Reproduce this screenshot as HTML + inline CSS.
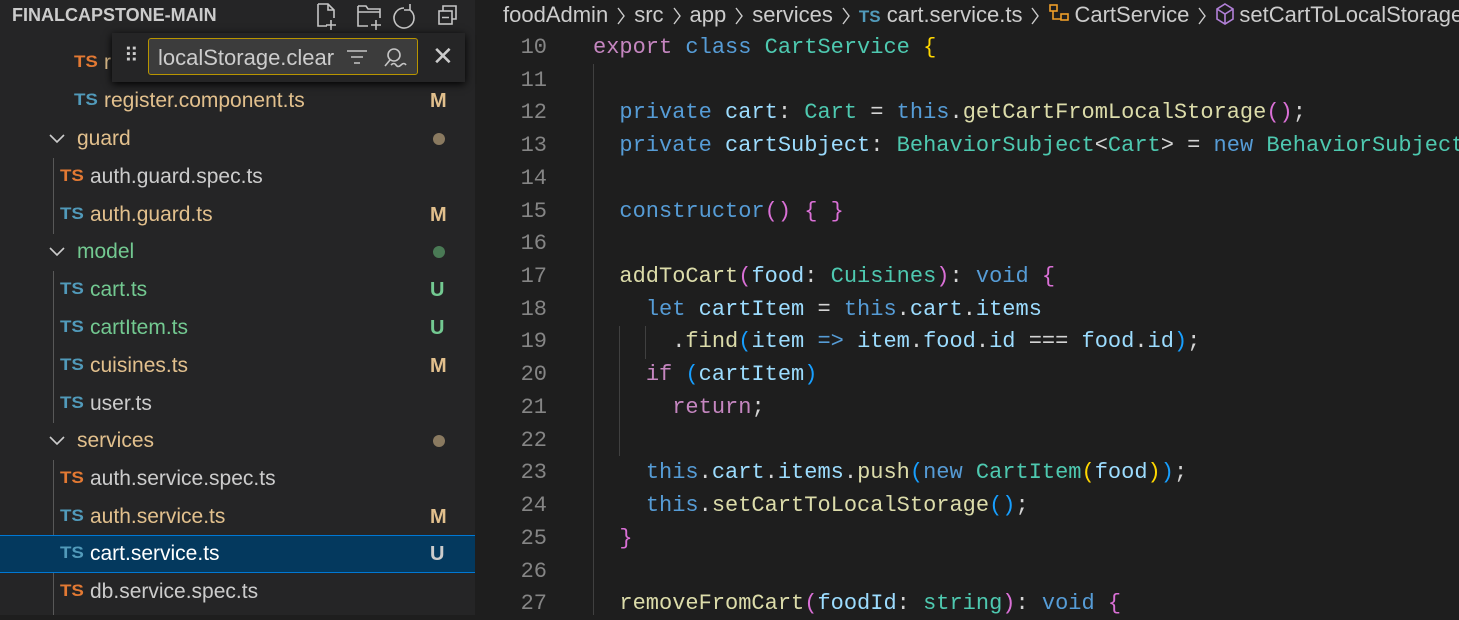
<!DOCTYPE html>
<html><head><meta charset="utf-8"><style>
body{margin:0;width:1459px;height:615px;overflow:hidden;background:#1e1e1e;font-family:"Liberation Sans",sans-serif;position:relative}
#side{position:absolute;left:0;top:0;width:475px;height:615px;background:#252526}
#shead{position:absolute;left:0;top:0;width:475px;height:32px;color:#ccc;font-weight:bold;font-size:18px}
.row{position:absolute;left:0;width:475px;height:38px;line-height:38px;font-size:21px;color:#ccc}
.row .ic{position:absolute;font-weight:bold;font-size:17px;top:-1px;transform:scaleX(1.1);transform-origin:left}
.o{color:#e37933}.b{color:#519aba}
.row .t{position:absolute}
.row .s{position:absolute;left:430px;font-weight:bold;font-size:20px}
.mod{color:#e2c08d}.unt{color:#73c991}
.dot{position:absolute;left:433px;top:13px;width:12px;height:12px;border-radius:6px}
.chev{position:absolute;left:48px;top:12px}
.guide{position:absolute;left:53px;width:1px;background:#585858}
#crumb{position:absolute;left:475px;top:0;width:984px;height:32px;background:#1e1e1e;color:#ccc;font-size:22px;line-height:30px;white-space:nowrap;overflow:hidden}
#crumb svg{margin:0 9px;vertical-align:-3px}
.code{position:absolute;left:475px;width:984px;height:33px;line-height:33px;font-family:"Liberation Mono",monospace;font-size:22px;color:#d4d4d4;white-space:pre}
.ln{position:absolute;left:0;width:72px;text-align:right;color:#858585}
.tx{position:absolute;left:118px}
.k{color:#569cd6}.c{color:#c586c0}.cl{color:#4ec9b0}.v{color:#9cdcfe}.f{color:#dcdcaa}.y{color:#ffd700}.p{color:#da70d6}.bl{color:#179fff}
.ig{position:absolute;width:1px;background:#404040}
</style></head><body>
<div id="side">
<div id="shead"><span style="position:absolute;left:12px;top:5px">FINALCAPSTONE-MAIN</span>
<svg style="position:absolute;left:314px;top:2px" width="160" height="28" fill="none" stroke="#c5c5c5" stroke-width="1.6">
<path d="M4 2h10l6 6v8M4 2v22h9M20 8h-6V2M17 18v10M12 23h10"/>
<path d="M44 4h8l2 3h12v9M44 4v20h10M44 10h22M62 18v10M57 23h10"/>
<path d="M90 6a10 10 0 1 0 6 2M96 2v6h-6"/>
<rect x="125" y="9" width="13" height="13"/><path d="M129 9V4h13v13h-4M128 15.5h7"/>
</svg></div>
<div class="guide" style="top:158px;height:76px"></div>
<div class="guide" style="top:271px;height:152px"></div>
<div class="guide" style="top:460px;height:155px"></div>
<div class="row" style="top:44px"><span class="ic o" style="left:74px">TS</span><span class="t mod" style="left:104px">r</span></div>
<div class="row" style="top:82px"><span class="ic b" style="left:74px">TS</span><span class="t mod" style="left:104px">register.component.ts</span><span class="s mod">M</span></div>
<div class="row" style="top:120px"><svg class="chev" width="18" height="12" fill="none" stroke="#ccc" stroke-width="1.6"><path d="M2 3l7 7 7-7"/></svg><span class="t mod" style="left:77px">guard</span><span class="dot" style="background:#8a7a60"></span></div>
<div class="row" style="top:158px"><span class="ic o" style="left:60px">TS</span><span class="t" style="left:90px">auth.guard.spec.ts</span></div>
<div class="row" style="top:196px"><span class="ic b" style="left:60px">TS</span><span class="t mod" style="left:90px">auth.guard.ts</span><span class="s mod">M</span></div>
<div class="row" style="top:233px"><svg class="chev" width="18" height="12" fill="none" stroke="#ccc" stroke-width="1.6"><path d="M2 3l7 7 7-7"/></svg><span class="t unt" style="left:77px">model</span><span class="dot" style="background:#4a7a55"></span></div>
<div class="row" style="top:271px"><span class="ic b" style="left:60px">TS</span><span class="t unt" style="left:90px">cart.ts</span><span class="s unt">U</span></div>
<div class="row" style="top:309px"><span class="ic b" style="left:60px">TS</span><span class="t unt" style="left:90px">cartItem.ts</span><span class="s unt">U</span></div>
<div class="row" style="top:347px"><span class="ic b" style="left:60px">TS</span><span class="t mod" style="left:90px">cuisines.ts</span><span class="s mod">M</span></div>
<div class="row" style="top:385px"><span class="ic b" style="left:60px">TS</span><span class="t" style="left:90px">user.ts</span></div>
<div class="row" style="top:422px"><svg class="chev" width="18" height="12" fill="none" stroke="#ccc" stroke-width="1.6"><path d="M2 3l7 7 7-7"/></svg><span class="t mod" style="left:77px">services</span><span class="dot" style="background:#8a7a60"></span></div>
<div class="row" style="top:460px"><span class="ic o" style="left:60px">TS</span><span class="t" style="left:90px">auth.service.spec.ts</span></div>
<div class="row" style="top:498px"><span class="ic b" style="left:60px">TS</span><span class="t mod" style="left:90px">auth.service.ts</span><span class="s mod">M</span></div>
<div class="row" style="top:535px;height:36px;background:#04395e;border-top:1px solid #0078d4;border-bottom:1px solid #0078d4;line-height:36px"><span class="ic b" style="left:60px">TS</span><span class="t" style="left:90px;color:#fff">cart.service.ts</span><span class="s" style="color:#ccc">U</span></div>
<div class="row" style="top:573px"><span class="ic o" style="left:60px">TS</span><span class="t" style="left:90px">db.service.spec.ts</span></div>
<div style="position:absolute;left:112px;top:33px;width:353px;height:49px;background:#252526;box-shadow:0 2px 8px #000">
<span style="position:absolute;left:12px;top:10px;color:#ccc;font-size:20px;letter-spacing:-2px">⠿</span>
<div style="position:absolute;left:36px;top:5px;width:270px;height:37px;border:1px solid #b89500;border-radius:3px;background:#3c3c3c;color:#ccc;font-size:22px;line-height:37px;box-sizing:border-box;padding-left:9px">localStorage.clear
<svg style="position:absolute;left:196px;top:7px" width="70" height="24" fill="none" stroke="#c5c5c5" stroke-width="1.6"><path d="M2 5h20M6 11h12M9 17h6"/><circle cx="49" cy="9" r="6"/><path d="M45 14l-5 6M46 19q3-3 5 0t5 0t5 0"/></svg></div>
<span style="position:absolute;left:320px;top:8px;color:#ccc;font-size:26px">✕</span>
</div>
</div>
<div id="crumb"><span style="position:absolute;left:28px">foodAdmin<svg width="8" height="18" fill="none" stroke="#ccc" stroke-width="1.4"><path d="M1 1l6 8-6 8"/></svg>src<svg width="8" height="18" fill="none" stroke="#ccc" stroke-width="1.4"><path d="M1 1l6 8-6 8"/></svg>app<svg width="8" height="18" fill="none" stroke="#ccc" stroke-width="1.4"><path d="M1 1l6 8-6 8"/></svg>services<svg width="8" height="18" fill="none" stroke="#ccc" stroke-width="1.4"><path d="M1 1l6 8-6 8"/></svg><b style="color:#519aba;font-size:17px">TS</b> cart.service.ts<svg width="8" height="18" fill="none" stroke="#ccc" stroke-width="1.4"><path d="M1 1l6 8-6 8"/></svg><svg style="margin:0 2px 0 0" width="24" height="22" fill="none" stroke="#ee9d28" stroke-width="1.6"><rect x="2" y="2" width="7" height="6"/><rect x="13" y="11" width="7" height="6"/><path d="M5 8v8h8"/></svg>CartService<svg width="8" height="18" fill="none" stroke="#ccc" stroke-width="1.4"><path d="M1 1l6 8-6 8"/></svg><svg style="margin:0 4px 0 0" width="20" height="22" fill="none" stroke="#b180d7" stroke-width="1.6"><path d="M10 1l8 5v10l-8 5-8-5V6zM2 6l8 5 8-5M10 11v10"/></svg>setCartToLocalStorage</span></div>
<div class="ig" style="left:593px;top:64px;height:551px"></div>
<div class="ig" style="left:619px;top:326px;height:130px"></div>
<div class="ig" style="left:645px;top:326px;height:33px"></div>
<div class="code" style="top:31px"><span class="ln">10</span><span class="tx"><span class="c">export</span> <span class="k">class</span> <span class="cl">CartService</span> <span class="y">{</span></span></div>
<div class="code" style="top:64px"><span class="ln">11</span></div>
<div class="code" style="top:96px"><span class="ln">12</span><span class="tx">  <span class="k">private</span> <span class="v">cart</span>: <span class="cl">Cart</span> = <span class="k">this</span>.<span class="f">getCartFromLocalStorage</span><span class="p">()</span>;</span></div>
<div class="code" style="top:129px"><span class="ln">13</span><span class="tx">  <span class="k">private</span> <span class="v">cartSubject</span>: <span class="cl">BehaviorSubject</span>&lt;<span class="cl">Cart</span>&gt; = <span class="k">new</span> <span class="cl">BehaviorSubject</span></span></div>
<div class="code" style="top:162px"><span class="ln">14</span></div>
<div class="code" style="top:195px"><span class="ln">15</span><span class="tx">  <span class="k">constructor</span><span class="p">()</span> <span class="p">{ }</span></span></div>
<div class="code" style="top:227px"><span class="ln">16</span></div>
<div class="code" style="top:260px"><span class="ln">17</span><span class="tx">  <span class="f">addToCart</span><span class="p">(</span><span class="v">food</span>: <span class="cl">Cuisines</span><span class="p">)</span>: <span class="k">void</span> <span class="p">{</span></span></div>
<div class="code" style="top:293px"><span class="ln">18</span><span class="tx">    <span class="k">let</span> <span class="v">cartItem</span> = <span class="k">this</span>.<span class="v">cart</span>.<span class="v">items</span></span></div>
<div class="code" style="top:325px"><span class="ln">19</span><span class="tx">      .<span class="f">find</span><span class="bl">(</span><span class="v">item</span> <span class="k">=&gt;</span> <span class="v">item</span>.<span class="v">food</span>.<span class="v">id</span> === <span class="v">food</span>.<span class="v">id</span><span class="bl">)</span>;</span></div>
<div class="code" style="top:358px"><span class="ln">20</span><span class="tx">    <span class="c">if</span> <span class="bl">(</span><span class="v">cartItem</span><span class="bl">)</span></span></div>
<div class="code" style="top:391px"><span class="ln">21</span><span class="tx">      <span class="c">return</span>;</span></div>
<div class="code" style="top:424px"><span class="ln">22</span></div>
<div class="code" style="top:456px"><span class="ln">23</span><span class="tx">    <span class="k">this</span>.<span class="v">cart</span>.<span class="v">items</span>.<span class="f">push</span><span class="bl">(</span><span class="k">new</span> <span class="cl">CartItem</span><span class="y">(</span><span class="v">food</span><span class="y">)</span><span class="bl">)</span>;</span></div>
<div class="code" style="top:489px"><span class="ln">24</span><span class="tx">    <span class="k">this</span>.<span class="f">setCartToLocalStorage</span><span class="bl">()</span>;</span></div>
<div class="code" style="top:522px"><span class="ln">25</span><span class="tx">  <span class="p">}</span></span></div>
<div class="code" style="top:555px"><span class="ln">26</span></div>
<div class="code" style="top:587px"><span class="ln">27</span><span class="tx">  <span class="f">removeFromCart</span><span class="p">(</span><span class="v">foodId</span>: <span class="cl">string</span><span class="p">)</span>: <span class="k">void</span> <span class="p">{</span></span></div>
</body></html>
